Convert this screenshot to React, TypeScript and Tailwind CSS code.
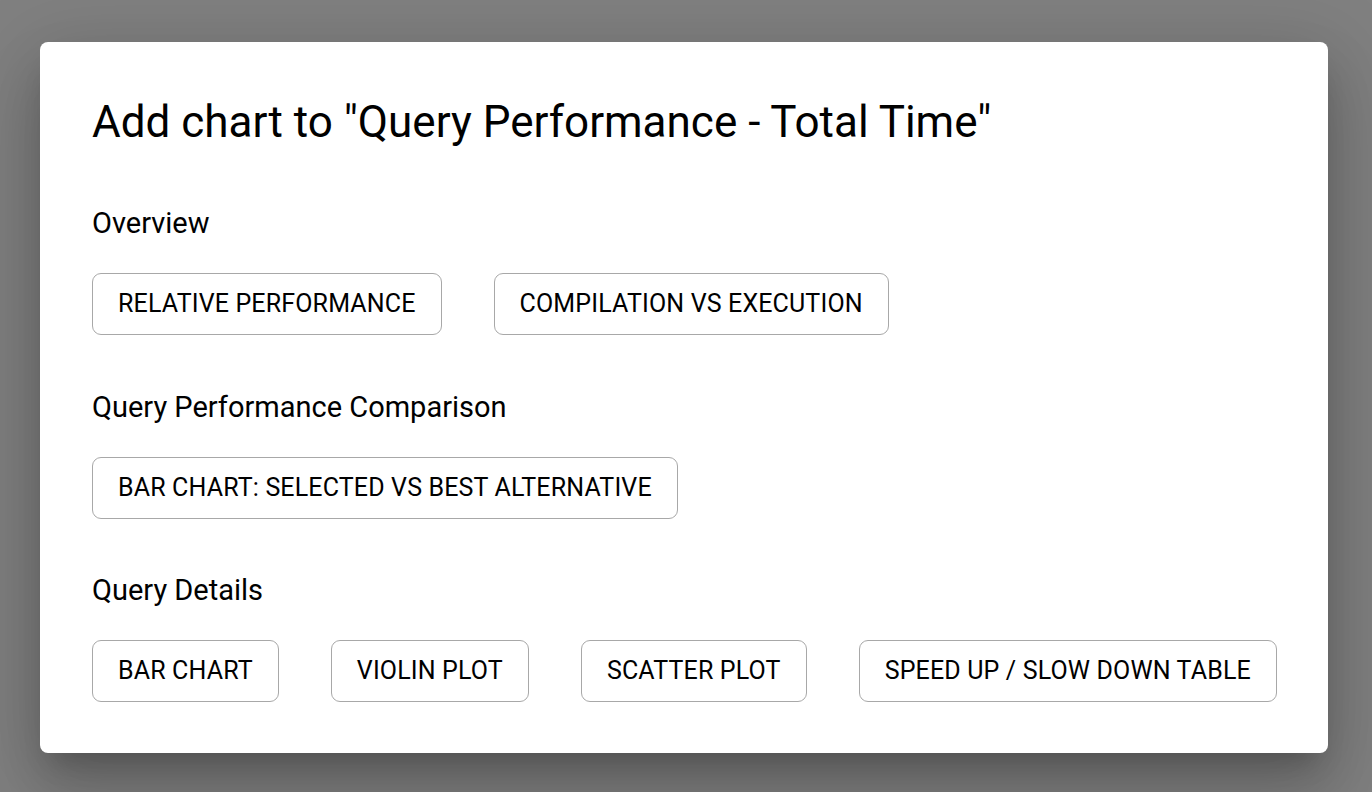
const SECTIONS = [
  {
    title: "Overview",
    charts: ["Relative Performance", "Compilation vs Execution"],
  },
  {
    title: "Query Performance Comparison",
    charts: ["Bar Chart: Selected vs Best Alternative"],
  },
  {
    title: "Query Details",
    charts: ["Bar Chart", "Violin Plot", "Scatter Plot", "Speed Up / Slow Down Table"],
  },
];

const App = () => {
  return (
    <div
      className="min-h-screen w-full bg-[#808080] pt-[42px] pl-[40px]"
      style={{ fontFamily: "Roboto, 'Noto Sans', sans-serif" }}
    >
      <div className="w-[1288px] bg-white rounded-[8px] px-[52px] pt-[48px] pb-[51px] shadow-[0_19px_26px_-12px_rgba(0,0,0,0.2),0_41px_65px_5px_rgba(0,0,0,0.14),0_15px_78px_14px_rgba(0,0,0,0.12)]">
        <h2 className="text-[44px] leading-[64px] text-black font-normal">
          Add chart to "Query Performance - Total Time"
        </h2>
        <div className="flex flex-col gap-[51.5px] mt-[49px]">
          {SECTIONS.map((section) => (
            <div key={section.title} className="flex flex-col">
              <p className="text-[29px] leading-[41px] text-black">
                {section.title}
              </p>
              <div className="flex gap-[52px] mt-[29px]">
                {section.charts.map((chart) => (
                  <button
                    key={chart}
                    className="shrink-0 whitespace-nowrap h-[62px] px-[25px] border border-[#a8a8a8] rounded-[9px] uppercase text-[25px] tracking-[0.15px] font-normal text-black bg-white hover:bg-black/[0.04]"
                  >
                    {chart}
                  </button>
                ))}
              </div>
            </div>
          ))}
        </div>
      </div>
    </div>
  );
};

export default App;
